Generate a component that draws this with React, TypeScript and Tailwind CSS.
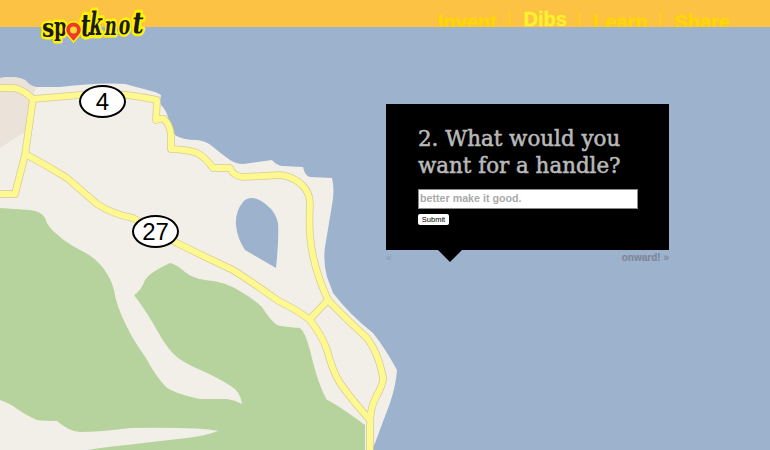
import React from 'react';

const navLinks = [
  { title: 'Invent', active: false, spacing: 'pr-[12px]' },
  { title: 'Dibs', active: true, spacing: 'border-l border-[#ffd800] pl-[14px] pr-[12px]' },
  { title: 'Learn', active: false, spacing: 'border-l border-[#ffd800] px-[13px]' },
  { title: 'Share', active: false, spacing: 'border-l border-[#ffd800] px-[13px]' },
];

const roads = [
  'M-5 88 L14 88 Q22 89 33 99 Q58 97 80 95 Q105 93 127 95 Q143 97 157 100 L156 120 Q160 118 164 119 Q170 125 171 135 L171 149 Q190 150 197 153 Q205 157 213 168 L230 168 Q233 176 243 177 Q262 176 280 175 Q295 177 303 186 Q310 193 310 205 Q309 220 310 235 Q312 265 328 300 Q345 318 367 338 Q378 352 383 377 Q384 383 376 397 Q370 408 370 425 L370 455',
  'M33 99 L25 155 L15 194 L-5 194',
  'M27 155 Q48 166 67 178 Q82 191 97 204 Q112 214 133 218 Q155 230 177 243 Q205 257 233 270 Q255 284 277 300 Q295 309 309 319 Q322 335 327 350 Q333 372 340 383 Q352 400 370 420',
  'M328 300 L310 319',
];

const logoLetters = [
  { ch: 's', x: 6, y: 37, sx: 0.95, sy: 1.1, skew: 0 },
  { ch: 'p', x: 18, y: 36, sx: 0.8, sy: 1.1, skew: 0 },
  { ch: 't', x: 44, y: 36, sx: 0.95, sy: 1.35, skew: -4 },
  { ch: 'k', x: 52, y: 35, sx: 0.8, sy: 1.4, skew: -8 },
  { ch: 'n', x: 68, y: 35, sx: 0.72, sy: 1.15, skew: -6 },
  { ch: 'o', x: 82, y: 34, sx: 0.75, sy: 1.15, skew: -6 },
  { ch: 't', x: 95, y: 33, sx: 1.05, sy: 1.3, skew: -8 },
];

const letterTransform = (l: (typeof logoLetters)[number]) =>
  `translate(${l.x} ${l.y}) skewX(${l.skew}) scale(${l.sx} ${l.sy})`;

const MapBackground = () => (
  <svg className="absolute inset-0" width="770" height="450" viewBox="0 0 770 450">
    <path
      fill="#f2efe9"
      d="M0 78 Q15 75 25 80 Q30 86 36 87 L60 87 Q100 82 125 84 L155 92 Q162 95 161 96 Q159 102 161 105 Q166 110 168 117 Q172 130 175 135 Q182 140 197 140 Q206 141 212 146 Q220 153 230 160 Q236 164 243 164 L272 160 Q276 165 282 166 L303 167 Q305 176 310 177 L332 178 Q335 190 332 205 L325 247 Q323 262 327 277 Q330 285 333 293 Q350 315 373 333 Q385 348 397 370 Q396 385 390 403 L375 443 L372 450 L0 450 Z"
    />
    <path fill="#ebe3d9" d="M0 78 Q15 75 25 80 Q30 86 36 87 L32 102 L28 130 L0 148 Z" />
    <path
      fill="#b7d39d"
      d="M0 208 Q15 209 30 210 Q41 211 45 218 Q48 228 58 235 Q65 242 80 250 Q95 257 103 268 Q111 278 114 290 Q116 305 126 325 Q133 340 146 358 Q155 375 165 386 Q172 393 200 399 L227 399 Q235 400 242 404 Q241 396 236 390 Q228 383 205 372 Q190 366 178 358 Q168 350 158 332 Q147 312 134 295 Q141 291 145 280 Q150 272 170 263 Q176 264 185 272 Q192 278 205 280 Q225 281 243 293 Q255 300 262 307 Q270 320 277 325 Q285 327 300 328 Q305 332 310 350 Q318 385 327 400 Q335 403 365 425 L365 450 L88 450 Q105 447 127 445 Q160 441 187 438 Q205 436 218 431 Q200 427 130 428 Q100 432 80 432 Q68 431 57 421 Q45 421 37 420 Q25 415 13 406 Q6 402 0 400 Z"
    />
    <path
      fill="#9cb2cd"
      d="M252 198 Q246 198 243 202 Q235 212 236 225 Q237 238 245 250 L276 268 Q279 240 278 223 Q275 212 270 208 Q260 198 252 198 Z"
    />
    {roads.map((d) => (
      <path key={d + 'c'} d={d} fill="none" stroke="#d8cb96" strokeWidth="7.5" strokeLinejoin="round" />
    ))}
    {roads.map((d) => (
      <path key={d} d={d} fill="none" stroke="#fdf88f" strokeWidth="6" strokeLinejoin="round" />
    ))}
  </svg>
);

const Logo = () => (
  <svg className="absolute left-[36px] top-0" width="112" height="46" viewBox="0 0 112 46">
    <g fontFamily="'DejaVu Serif', serif" fontWeight="700" fontSize="23">
      {logoLetters.map((l, i) => (
        <text
          key={i}
          transform={letterTransform(l)}
          fill="#fff200"
          stroke="#fff200"
          strokeWidth="4.5"
          strokeLinejoin="round"
          aria-hidden="true"
        >
          {l.ch}
        </text>
      ))}
      {logoLetters.map((l, i) => (
        <text key={i} transform={letterTransform(l)} fill="#1a1a1a">
          {l.ch}
        </text>
      ))}
    </g>
    <path d="M37.5 42 L31.5 35 A8 8 0 1 1 43.5 35 Z" fill="#ee3a2c" stroke="#fff200" strokeWidth="1.5" />
    <circle cx="37.5" cy="30" r="3.5" fill="#fdd835" />
  </svg>
);

const RouteBadge = ({ label, className }: { label: string; className: string }) => (
  <div
    className={`absolute flex h-[33px] w-[47px] items-center justify-center rounded-[50%] border-2 border-black bg-white font-['Liberation_Sans',sans-serif] text-[24px] text-black ${className}`}
  >
    {label}
  </div>
);

export default function App() {
  return (
    <div className="relative h-[450px] w-[770px] overflow-hidden bg-[#9cb2cd] font-['Liberation_Sans',sans-serif]">
      <MapBackground />
      <RouteBadge label="4" className="left-[79px] top-[85px]" />
      <RouteBadge label="27" className="left-[132px] top-[215px]" />

      {/* top bar, the nav text is cut off by the bottom edge */}
      <nav className="relative h-[27px] overflow-hidden bg-[#fbc244]">
        <ul className="flex justify-end pr-[27px] pt-[11px] text-[20px] font-bold leading-[23px] text-[#ffd800] [-webkit-text-stroke:0.3px_#ffd800]">
          {navLinks.map(({ title, active, spacing }) => (
            <li key={title} className={`h-[23px] ${spacing}`}>
              <span
                className={`block ${active ? '-translate-y-[3px] text-[#fff22d] [-webkit-text-stroke:0.3px_#fff22d]' : ''}`}
              >
                {title}
              </span>
            </li>
          ))}
        </ul>
      </nav>
      <Logo />

      <div className="relative ml-[386px] mt-[77px] w-[283px]">
        <div className="h-[146px] bg-black pl-[32px] pt-[21px]">
          <h2 className="font-['DejaVu_Serif',serif] text-[21.4px] leading-[27px] text-[#b9b9b9] [-webkit-text-stroke:0.55px_#b9b9b9]">
            2. What would you
            <br />
            want for a handle?
          </h2>
          <input
            className="mt-[10px] block h-[20px] w-[220px] border border-[#8a8a8a] bg-white px-[1px] pb-[2px] text-[10.7px] font-bold text-[#aaa] placeholder:text-[#aaa]"
            placeholder="better make it good."
          />
          <button className="mt-[5px] block h-[11px] w-[31px] rounded-[2px] bg-white text-[7.5px] leading-[11px] text-black">
            Submit
          </button>
        </div>
        <div className="absolute left-[52px] top-[146px] h-0 w-0 border-x-[12px] border-t-[12px] border-x-transparent border-t-black" />
        <div className="flex items-center justify-between pt-[2px] text-[10px] font-bold leading-[12px] text-[#7f8798]">
          <span className="font-normal text-[#8a99b0]">«</span>
          <span className="[-webkit-text-stroke:0.2px_#7f8798]">
            onward! <span className="font-normal">»</span>
          </span>
        </div>
      </div>
    </div>
  );
}
